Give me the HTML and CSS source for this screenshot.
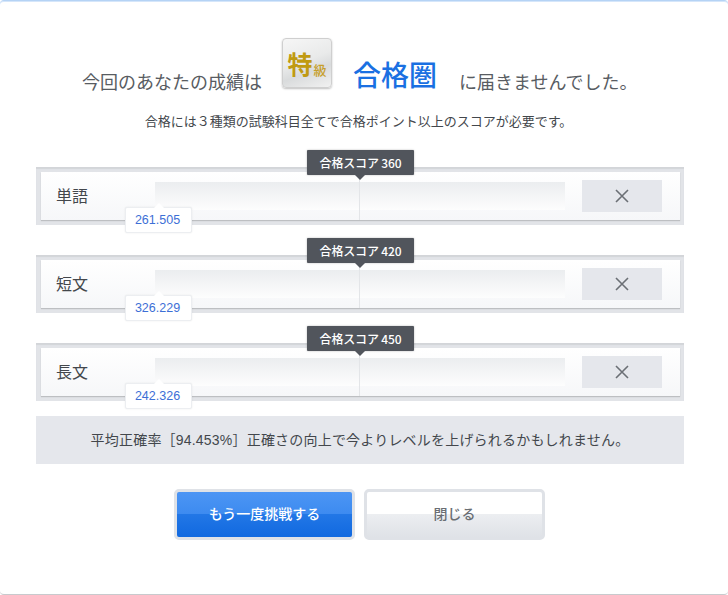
FILE: index.html
```html
<!DOCTYPE html>
<html lang="ja">
<head>
<meta charset="utf-8">
<title>結果</title>
<link rel="stylesheet" href="styles.css">
</head>
<body>
<main class="panel">
  <h1 class="headline">
    <span class="lead">今回のあなたの成績は</span>
    <span class="badge"><span class="badge-big">特</span><span class="badge-small">級</span></span>
    <strong class="zone">合格圏</strong>
    <span class="tail">に届きませんでした。</span>
  </h1>
  <p class="sub">合格には３種類の試験科目全てで合格ポイント以上のスコアが必要です。</p>

  <section class="rows">
    <div class="row">
      <div class="row-inner">
        <span class="label">単語</span>
        <div class="bar"><span class="mark"></span></div>
        <div class="result"><svg class="cross" viewBox="0 0 14 14"><path d="M1 1 13 13M13 1 1 13"/></svg></div>
      </div>
      <div class="tip">合格スコア 360</div>
      <div class="score">261.505</div>
    </div>
    <div class="row">
      <div class="row-inner">
        <span class="label">短文</span>
        <div class="bar"><span class="mark"></span></div>
        <div class="result"><svg class="cross" viewBox="0 0 14 14"><path d="M1 1 13 13M13 1 1 13"/></svg></div>
      </div>
      <div class="tip">合格スコア 420</div>
      <div class="score">326.229</div>
    </div>
    <div class="row">
      <div class="row-inner">
        <span class="label">長文</span>
        <div class="bar"><span class="mark"></span></div>
        <div class="result"><svg class="cross" viewBox="0 0 14 14"><path d="M1 1 13 13M13 1 1 13"/></svg></div>
      </div>
      <div class="tip">合格スコア 450</div>
      <div class="score">242.326</div>
    </div>
  </section>

  <p class="notice">平均正確率［94.453%］正確さの向上で今よりレベルを上げられるかもしれません。</p>

  <div class="actions">
    <button class="btn btn-primary" type="button">もう一度挑戦する</button>
    <button class="btn btn-close" type="button">閉じる</button>
  </div>
</main>
</body>
</html>
```
FILE: styles.css
```css
* { box-sizing: border-box; }
html, body { margin: 0; height: 100%; }
body {
  background: #fff;
  font-family: "Liberation Sans", "Noto Sans CJK JP", sans-serif;
  color: #555a60;
  overflow: hidden;
}
.panel {
  width: 728px;
  height: 595px;
  padding: 37px 44px 0 36px;
  border-top: 1px solid #b5d3f5;
  border-bottom: 1px solid #c8cacd;
  border-radius: 4px;
  box-shadow: inset 0 1px 0 #d5e6fa;
  position: relative;
}
.headline {
  margin: 0;
  height: 61px;
  display: flex;
  align-items: flex-start;
  font-weight: 400;
  font-size: 18px;
  line-height: 26px;
  color: #585c62;
}
.lead { margin: 32px 0 0 46px; width: 180px; }
.badge {
  margin-left: 20px;
  width: 50px;
  height: 50px;
  border: 1px solid #cfcfcf;
  border-radius: 4px;
  background: linear-gradient(160deg, #f6f6f6 0%, #e9eaea 45%, #d9dbdc 65%, #f1f1f1 100%);
  box-shadow: 0 1px 2px rgba(0,0,0,.25);
  display: flex;
  align-items: flex-end;
  justify-content: center;
  padding: 0 0 9px 0;
  color: #c09a12;
  font-weight: 700;
  line-height: 1;
}
.badge-big { font-size: 25px; }
.badge-small { font-size: 13px; font-weight: 500; color: #c79f2a; margin: 0 0 1px 1px; }
.zone {
  margin: 21px 0 0 21px;
  width: 84px;
  font-size: 28px;
  line-height: 36px;
  font-weight: 500;
  color: #1a70e2;
}
.tail { margin: 32px 0 0 22px; white-space: nowrap; }
.sub {
  margin: 0;
  height: 68px;
  padding: 13px 3px 0 0;
  text-align: center;
  font-size: 13px;
  line-height: 20px;
  color: #43474c;
}
.rows {
  display: flex;
  flex-direction: column;
  gap: 30px;
}
.row {
  position: relative;
  height: 58px;
  padding: 5px 4px 5px 5px;
  background: #e2e4e8;
  box-shadow: inset 0 2px 1px #d3d5d9;
}
.row-inner {
  height: 48px;
  display: flex;
  align-items: center;
  background: linear-gradient(#fff, #f6f7f9);
  box-shadow: 0 1px 1px rgba(0,0,0,.16);
}
.label {
  width: 114px;
  padding: 0 0 3px 15px;
  font-size: 16px;
  color: #43474c;
}
.bar {
  position: relative;
  width: 410px;
  height: 28px;
  background: linear-gradient(#ebedef, #fdfdfd);
}
.mark {
  position: absolute;
  left: 204px;
  top: -10px;
  bottom: -10px;
  width: 1px;
  background: #e3e5e8;
}
.result {
  margin-left: 17px;
  width: 80px;
  height: 32px;
  background: #e5e7ec;
  display: flex;
  align-items: center;
  justify-content: center;
}
.cross {
  width: 14px;
  height: 14px;
  fill: none;
  stroke: #6b6f75;
  stroke-width: 1.6;
}
.tip {
  position: absolute;
  left: 271px;
  top: -17px;
  width: 107px;
  height: 25px;
  background: #51555c;
  color: #fff;
  font-family: "Noto Sans CJK JP", sans-serif;
  font-size: 12px;
  font-weight: 500;
  letter-spacing: -.15px;
  line-height: 25px;
  text-align: center;
  border-radius: 1px;
  box-shadow: 0 0 2px rgba(0,0,0,.3);
}
.tip::after {
  content: "";
  position: absolute;
  left: 48px;
  top: 25px;
  border: 5px solid transparent;
  border-bottom: 0;
  border-top-color: #51555c;
}
.score {
  position: absolute;
  left: 89px;
  top: 40px;
  width: 67px;
  height: 26px;
  padding-right: 2px;
  background: #fff;
  border: 1px solid #eceef1;
  border-radius: 2px;
  color: #3d6fd6;
  font-size: 12.5px;
  line-height: 24px;
  text-align: center;
  box-shadow: 0 0 2px rgba(0,0,0,.08);
}
.score::before {
  content: "";
  position: absolute;
  left: 28px;
  top: -5px;
  width: 0;
  height: 0;
  border: 5px solid transparent;
  border-top: 0;
  border-bottom-color: #fff;
}
.notice {
  margin: 15px 0 0;
  height: 48px;
  background: #e5e7ec;
  text-align: center;
  font-size: 14px;
  letter-spacing: .2px;
  line-height: 48px;
  color: #43474c;
}
.actions {
  margin: 25px 0 0 138px;
  display: flex;
  gap: 9px;
}
.btn {
  width: 181px;
  height: 51px;
  padding: 0 0 4px;
  border: 3px solid #dfe2e7;
  border-radius: 5px;
  font: inherit;
  font-family: "Noto Sans CJK JP", sans-serif;
  font-size: 14px;
  font-weight: 500;
}
.btn-primary {
  color: #fff;
  background: linear-gradient(#4c95f4 0%, #3d8bf0 49%, #2277e6 50%, #1169e0 100%);
}
.btn-close {
  color: #6a6e73;
  background: linear-gradient(#fff 0%, #fff 49%, #eceef1 50%, #dfe2e7 100%);
}
```
